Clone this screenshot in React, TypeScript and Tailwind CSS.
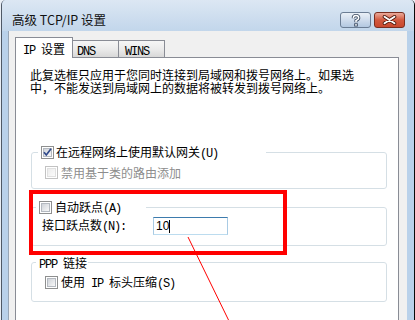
import React from 'react';

// half-width latin run, SimSun style (6px per char at 12px)
const Latin: React.FC<{ children: React.ReactNode }> = ({ children }) => (
  <span className="font-['Liberation_Mono'] tracking-[-1.2px]">{children}</span>
);

const CheckBox: React.FC<{ checked?: boolean; disabled?: boolean }> = ({ checked, disabled }) => (
  <span
    className={`relative flex h-[13px] w-[13px] shrink-0 items-center justify-center border bg-white ${
      disabled ? 'border-[#c2c2c2]' : 'border-[#8e8f8f]'
    }`}
  >
    <span
      className={`h-[9px] w-[9px] border bg-gradient-to-br ${
        disabled ? 'border-[#e0e0e0] from-[#ececec] to-[#fbfbfb]' : 'border-[#b4b9c0] from-[#cfd3d9] to-[#f8f8f8]'
      }`}
    />
    {checked && (
      <svg className="absolute inset-0" width="11" height="11" viewBox="0 0 11 11">
        <path d="M2 5.2 L4.3 8 L9 1.8" fill="none" stroke="#30498a" strokeWidth="1.7" />
      </svg>
    )}
  </span>
);

const HelpButton = () => (
  <div className="flex h-[16px] w-[31px] items-center justify-center rounded-[3px] border border-[#6b7d94] bg-gradient-to-b from-[#eaf0f7] via-[#cfdcec] to-[#b3c8e0]">
    <svg width="10" height="13" viewBox="0 0 10 13">
      <path d="M2.3 4.2 Q2.3 1.6 5 1.6 Q7.7 1.6 7.7 3.9 Q7.7 5.4 5 6.6 V8.2" fill="none" stroke="#3d4c62" strokeWidth="3.2" />
      <rect x="3.2" y="9.3" width="3.6" height="3.2" fill="#3d4c62" />
      <path d="M2.3 4.2 Q2.3 1.6 5 1.6 Q7.7 1.6 7.7 3.9 Q7.7 5.4 5 6.6 V8.2" fill="none" stroke="#ffffff" strokeWidth="1.5" />
      <rect x="4.2" y="10.1" width="1.6" height="1.6" fill="#ffffff" />
    </svg>
  </div>
);

const CloseButton = () => (
  <div className="flex h-[16px] w-[31px] items-center justify-center rounded-[3px] border border-[#7a2e20] bg-gradient-to-b from-[#eaaa9b] via-[#d2593f] to-[#c9482e]">
    <svg width="15" height="10" viewBox="0 0 15 10">
      <path d="M2.5 1.8 L12.5 8.2 M12.5 1.8 L2.5 8.2" stroke="#4d1a10" strokeWidth="3.6" strokeLinecap="round" />
      <path d="M2.5 1.8 L12.5 8.2 M12.5 1.8 L2.5 8.2" stroke="#ffffff" strokeWidth="1.9" strokeLinecap="round" />
    </svg>
  </div>
);

export default function App() {
  return (
    <div className="relative h-[320px] w-[415px] overflow-hidden bg-[#e9eef5] font-['Noto_Sans_CJK_SC'] text-[12px] leading-[13px] text-black">
      <div className="ml-[1px] flex h-[330px] w-[414px] flex-col overflow-hidden rounded-t-[5px] border-l border-r border-l-[#4f5966] border-r-[#0a0a0a] bg-[#b9d1ea]">
        {/* title bar */}
        <div className="flex h-[31px] shrink-0 items-start justify-between bg-gradient-to-b from-[#dce7f3] to-[#c2d6eb] pl-[10px] pr-[9px]">
          <div className="mt-[13px] text-[12.5px] leading-[14px] text-[#111]">高级 TCP/IP 设置</div>
          <div className="mt-[12px] flex gap-[3px]">
            <HelpButton />
            <CloseButton />
          </div>
        </div>

        {/* frame + client */}
        <div className="flex flex-1 pl-[6px] pr-[7px]">
          <div className="flex-1 border-l border-[#98a6b6] bg-[#f0f0f0] pl-[6px] pt-[6px]">
            {/* tabs */}
            <div className="flex h-[20px] items-start">
              <div className="relative z-10 h-[21px] w-[58px] border-l border-r border-t border-[#898c95] bg-white pl-[7px] pt-[4px]">
                <Latin>IP </Latin>设置
              </div>
              <div className="mt-[3px] h-[17px] w-[46px] border-r border-t border-[#898c95] bg-gradient-to-b from-[#f6f6f6] via-[#ebebeb] to-[#d8d8d8] pl-[4px] pt-[2px]">
                <Latin>DNS</Latin>
              </div>
              <div className="mt-[3px] h-[17px] w-[46px] border-r border-t border-[#898c95] bg-gradient-to-b from-[#f6f6f6] via-[#ebebeb] to-[#d8d8d8] pl-[6px] pt-[2px]">
                <Latin>WINS</Latin>
              </div>
            </div>

            {/* panel */}
            <div className="h-[300px] w-[384px] border border-[#898c95] bg-white">
              <p className="ml-[14px] mt-[10px] w-[330px]">
                此复选框只应用于您同时连接到局域网和拨号网络上。如果选中，不能发送到局域网上的数据将被转发到拨号网络上。
              </p>

              <fieldset className="ml-[15px] mt-[52px] w-[356px] rounded-[3px] border border-[#d5dfe5] pb-[9px] pt-[7px]">
                <legend className="ml-[6px] flex h-[13px] w-[228px] items-center gap-[2px] pl-[3px]">
                  <CheckBox checked />
                  <span>
                    在远程网络上使用默认网关<Latin>(U)</Latin>
                  </span>
                </legend>
                <div className="flex h-[13px] items-center gap-[3px] pl-[13px] text-[#8d8d8d]">
                  <CheckBox disabled />
                  <span>禁用基于类的路由添加</span>
                </div>
              </fieldset>

              <fieldset className="ml-[15px] mt-[12px] w-[356px] rounded-[3px] border border-[#d5dfe5] pb-[10px] pt-[3px]">
                <legend className="ml-[4px] flex h-[13px] w-[110px] items-center gap-[3px] pl-[3px]">
                  <CheckBox />
                  <span>
                    自动跃点<Latin>(A)</Latin>
                  </span>
                </legend>
                <div className="flex h-[18px] items-center pl-[10px]">
                  <span className="w-[111px]">
                    接口跃点数<Latin>(N):</Latin>
                  </span>
                  <div className="flex h-[18px] w-[75px] items-center border border-x-[#a9cbe4] border-b-[#bcdcef] border-t-[#3d7bad] bg-white pl-[2px] font-['Liberation_Sans'] text-[12px]">
                    <span>10</span>
                    <span className="h-[13px] w-[1px] bg-black" />
                  </div>
                </div>
              </fieldset>

              <fieldset className="ml-[15px] mt-[10px] w-[356px] rounded-[3px] border border-[#d5dfe5] pb-[12px] pt-[7px]">
                <legend className="ml-[4px] h-[13px] w-[52px] pl-[3px]">
                  <Latin>PPP&nbsp;</Latin>链接
                </legend>
                <div className="flex h-[13px] items-center gap-[3px] pl-[13px]">
                  <CheckBox />
                  <span>
                    使用<Latin> IP </Latin>标头压缩<Latin>(S)</Latin>
                  </span>
                </div>
              </fieldset>
            </div>
          </div>
        </div>
      </div>

      {/* annotation overlay */}
      <div className="pointer-events-none absolute left-[29px] top-[190px] h-[65px] w-[258px] border-[4px] border-[#ff0000]" />
      <svg className="pointer-events-none absolute inset-0" width="415" height="320">
        <line x1="188" y1="237" x2="229" y2="321" stroke="#ff0000" strokeWidth="1" />
      </svg>
    </div>
  );
}
